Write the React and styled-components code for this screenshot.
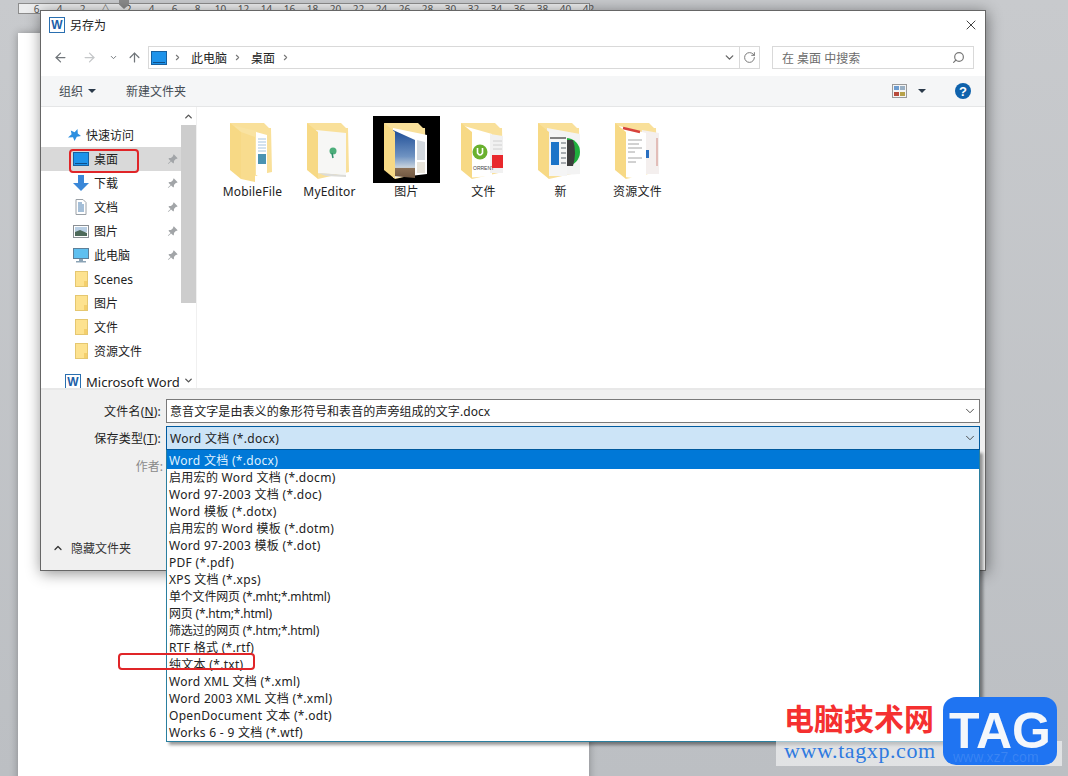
import React from "react";
import styled, { createGlobalStyle } from "styled-components";
import { ArrowLeft, ArrowRight, ArrowUp, ChevronDown, ChevronRight, ChevronUp, RotateCw, Search, X } from "lucide-react";
import { BsPinAngleFill } from "react-icons/bs";

const GlobalStyle = createGlobalStyle`
html, body {
    margin: 0;
    padding: 0;
    background: #c0c3c7;
}
* { box-sizing: border-box; }
`

const Workspace = styled.div`
position: relative;
width: 1068px;
height: 776px;
overflow: hidden;
padding: 3px 0 0 18px;
background: linear-gradient(180deg, #c8cacd 0%, #bcbfc3 100%);
font-family: "Noto Sans", "Noto Sans CJK SC", sans-serif;
font-size: 12px;
color: #222;
`

const Ruler = styled.div`
position: relative;
display: flex;
width: 572px;
height: 11px;
padding: 1px 0 0 6px;
background: #ecedee;
border: 1px solid #8c8c8c;
font-size: 10px;
line-height: 9px;
color: #555;
`

const RulerMark = styled.span`
flex: 0 0 23px;
text-align: center;
`

const IndentMarker = styled.span`
position: absolute;
left: 100px;
top: -4px;
width: 10px;
height: 9px;
background: #8a8a8a;
clip-path: polygon(0 0, 100% 0, 100% 50%, 50% 100%, 0 50%);
`

const Page = styled.div`
width: 571px;
height: 760px;
margin-top: 19px;
background: #fff;
box-shadow: 0 0 8px rgba(0,0,0,.3);
`

const Dialog = styled.div`
position: absolute;
left: 40px;
top: 10px;
width: 946px;
height: 561px;
display: flex;
flex-direction: column;
background: #fff;
border: 1px solid #666;
box-shadow: 1px 2px 14px rgba(0,0,0,.45);
`

const TitleBar = styled.div`
display: flex;
align-items: center;
flex: 0 0 34px;
padding: 0 6px 6px 8px;
gap: 5px;
`

const AppBadge = styled.span`
display: flex;
align-items: center;
justify-content: center;
flex: 0 0 16px;
height: 16px;
background: #fff;
border: 1px solid #2a6fb0;
color: #1c5fa8;
font-family: "Liberation Sans", sans-serif;
font-size: 12px;
font-weight: 700;
line-height: 1;
`

const CloseButton = styled.span`
display: flex;
margin-left: auto;
color: #111;
`

const NavBar = styled.div`
display: flex;
align-items: flex-start;
flex: 0 0 31px;
padding-top: 1px;
`

const NavCell = styled.span`
display: flex;
align-items: center;
justify-content: center;
flex: 0 0 ${props => props.$w}px;
height: 23px;
color: ${props => props.$muted ? '#c4c6c8' : '#70757a'};
`

const AddressBox = styled.div`
display: flex;
align-items: center;
width: 612px;
height: 23px;
margin-left: 6px;
padding-left: 2px;
gap: 6px;
border: 1px solid #d9d9d9;
`

const Crumb = styled.span`
color: #222;
`

const CrumbArrow = styled.span`
display: flex;
margin-right: 3px;
color: #777;
`

const AddressEnd = styled.span`
display: flex;
align-items: center;
margin-left: auto;
height: 100%;
`

const AddressDrop = styled.span`
display: flex;
padding-right: 3px;
color: #666;
`

const RefreshCell = styled.span`
display: flex;
align-items: center;
justify-content: center;
width: 20px;
height: 100%;
border-left: 1px solid #d9d9d9;
color: #777;
`

const SearchBox = styled.div`
display: flex;
align-items: center;
justify-content: space-between;
width: 202px;
height: 23px;
margin-left: 12px;
padding: 0 8px 0 9px;
border: 1px solid #d9d9d9;
color: #6d6d6d;
`

const FlippedIcon = styled.span`
display: flex;
transform: scaleX(-1);
color: #777;
`

const Toolbar = styled.div`
display: flex;
align-items: center;
flex: 0 0 31px;
padding: 0 14px 0 18px;
background: #f5f6f7;
border-bottom: 1px solid #e5e6e7;
color: #444b53;
`

const Caret = styled.span`
width: 0;
height: 0;
margin-left: ${props => props.$gap}px;
border-left: 4px solid transparent;
border-right: 4px solid transparent;
border-top: 4px solid #2b3a4a;
`

const ToolLink = styled.span`
margin-left: 30px;
`

const ViewIcon = styled.svg`
margin-left: auto;
`

const HelpBadge = styled.span`
display: flex;
align-items: center;
justify-content: center;
width: 16px;
height: 16px;
margin-left: 29px;
border-radius: 50%;
background: #0f62ac;
color: #fff;
font-family: "Liberation Sans", sans-serif;
font-size: 13px;
font-weight: 700;
`

const Body = styled.div`
display: flex;
flex: 0 0 281px;
overflow: hidden;
`

const Sidebar = styled.nav`
flex: 0 0 140px;
padding-top: 16px;
overflow: hidden;
font-size: 12px;
`

const NavRow = styled.div`
display: flex;
align-items: center;
height: 24px;
margin-top: ${props => props.$gapTop || 0}px;
padding-left: ${props => props.$indent}px;
padding-right: 3px;
gap: ${props => props.$gap}px;
background: ${props => props.$active ? '#d9d9d9' : 'transparent'};
white-space: nowrap;
`

const NavIcon = styled.span`
display: flex;
justify-content: center;
flex: 0 0 16px;
`

const PinMark = styled.span`
display: flex;
margin-left: auto;
color: #a2a5a8;
`

const WordLabel = styled.span`
font-size: 13px;
line-height: 10px;
`

const ScrollTrack = styled.div`
display: flex;
flex-direction: column;
flex: 0 0 16px;
border-right: 1px solid #f0f0f0;
`

const ScrollArrow = styled.span`
display: flex;
align-items: ${props => props.$end ? 'flex-end' : 'center'};
justify-content: center;
flex: 0 0 ${props => props.$h}px;
padding-bottom: ${props => props.$end ? 2 : 0}px;
color: #555;
`

const ScrollThumb = styled.span`
flex: 0 0 178px;
width: 15px;
background: #cdcdcd;
`

const FileArea = styled.div`
display: flex;
align-items: flex-start;
flex: 1;
padding: 9px 0 0 17px;
`

const FileItem = styled.div`
display: flex;
flex-direction: column;
align-items: center;
width: 77px;
`

const FileName = styled.span`
line-height: 17px;
letter-spacing: .2px;
`

const FormPanel = styled.div`
display: flex;
flex-direction: column;
flex: 1;
padding: 9px 5px 0 0;
background: #f0f0f0;
border-top: 2px solid #e8e8e8;
`

const FormRow = styled.div`
position: relative;
display: grid;
grid-template-columns: 120px 1fr;
align-items: center;
column-gap: 5px;
margin-bottom: 3px;
`

const FieldLabel = styled.label`
text-align: right;
letter-spacing: .2px;
color: #222;
`

const ComboBox = styled.div`
display: flex;
align-items: center;
justify-content: space-between;
height: 24px;
padding: 0 2px 0 3px;
background: ${props => props.$open ? '#cce4f7' : '#fff'};
border: 1px solid ${props => props.$open ? '#005a9e' : '#7a7a7a'};
letter-spacing: ${props => props.$open ? '.3px' : '.08px'};
white-space: nowrap;
`

const ComboArrow = styled.span`
display: flex;
color: #444;
`

const DropList = styled.ul`
position: absolute;
z-index: 3;
left: 125px;
right: 0;
top: 24px;
margin: 0;
padding: 0;
list-style: none;
background: #fff;
border: 1px solid #2a7f9f;
border-top: 0;
box-shadow: 3px 3px 3px rgba(0,0,0,.4);
`

const DropItem = styled.li`
height: 17px;
padding-left: 2px;
line-height: 17px;
white-space: nowrap;
letter-spacing: ${props => props.$tight ? '-.2px' : '.3px'};
background: ${props => props.$selected ? '#0078d7' : 'transparent'};
color: ${props => props.$selected ? '#dff1ff' : '#222'};
&:first-child { height: 19px; line-height: 21px; }
`

const AuthorRow = styled.div`
width: 122px;
margin-top: 4px;
text-align: right;
color: #8a8a8a;
`

const HideRow = styled.div`
display: flex;
align-items: center;
margin-top: auto;
padding: 0 0 13px 11px;
gap: 7px;
color: #333;
`

const Annotation = styled.span`
position: absolute;
z-index: 4;
left: ${props => props.$x}px;
top: ${props => props.$y}px;
width: ${props => props.$w}px;
height: ${props => props.$h}px;
border: 2.5px solid #e02528;
border-radius: 4px;
`

const Watermark = styled.div`
position: absolute;
z-index: 5;
left: 776px;
top: 697px;
display: flex;
width: 286px;
height: 69px;
padding-left: 8px;
background: linear-gradient(transparent 44px, rgba(255,255,255,.55) 44px);
`

const SiteBlock = styled.div`
display: flex;
flex-direction: column;
flex: 0 0 159px;
`

const SiteName = styled.span`
font-family: "Noto Sans CJK SC", sans-serif;
font-size: 30px;
font-weight: 700;
line-height: 40px;
color: #f53030;
white-space: nowrap;
`

const SiteUrl = styled.span`
margin-top: 1px;
font-family: "Liberation Serif", serif;
font-size: 22px;
line-height: 26px;
color: #2f7ae0;
letter-spacing: .6px;
white-space: nowrap;
`

const TagLogo = styled.span`
position: relative;
display: flex;
align-items: center;
justify-content: center;
width: 114px;
height: 68px;
border-radius: 13px;
background: #1f74f2;
color: #f4f7fb;
font-family: "Liberation Sans", sans-serif;
font-size: 50px;
font-weight: 700;
line-height: 1;
`

const TagShadowText = styled.span`
position: absolute;
left: 10px;
bottom: 1px;
font-size: 14px;
font-weight: 400;
color: rgba(255,255,255,.13);
`

const DesktopIcon = () => (
    <svg width="16" height="14" viewBox="0 0 16 14">
        <rect x=".5" y=".5" width="15" height="13" fill="#1e93ea" stroke="#17609f" />
        <rect x="2" y="11" width="12" height="1" fill="#0d4f8a" />
    </svg>
)

const StarIcon = () => (
    <svg width="13" height="13" viewBox="0 0 13 13">
        <path d="M9.5 0 9.8 4.6 13 7 8.8 7.8 6.5 12 5 8.2 0 8.5 3.6 5.2 2.8 1.6 6.6 3.2Z" fill="#2c8fe0" />
    </svg>
)

const DownloadIcon = () => (
    <svg width="16" height="16" viewBox="0 0 16 16">
        <path d="M5 0H11V8H16L8 16 0 8H5Z" fill="#3a87d8" />
    </svg>
)

const DocIcon = () => (
    <svg width="16" height="16" viewBox="0 0 16 16">
        <path d="M3 .5H10L13 3.5V15.500H3Z" fill="#fff" stroke="#9aa0a6" />
        <path d="M5 4H9M5 6H11M5 8H11M5 10H11M5 12H11" stroke="#4a7fb0" />
    </svg>
)

const PictureIcon = () => (
    <svg width="16" height="13" viewBox="0 0 16 13">
        <rect x=".5" y=".5" width="15" height="12" fill="#fff" stroke="#8a8f94" />
        <rect x="2" y="2" width="12" height="5" fill="#b9cfe4" />
        <path d="M2 7 7 5 14 8V11H2Z" fill="#4d6a5a" />
    </svg>
)

const ComputerIcon = () => (
    <svg width="16" height="15" viewBox="0 0 16 15">
        <rect x=".5" y=".5" width="15" height="10" fill="#5fc0f0" stroke="#5e7f98" />
        <rect x="6" y="11" width="4" height="2" fill="#8ba3b5" />
        <rect x="3" y="13" width="10" height="1.500" fill="#8ba3b5" />
    </svg>
)

const SmallFolder = () => (
    <svg width="13" height="16" viewBox="0 0 13 16">
        <rect x=".5" y=".5" width="12" height="15" fill="#fde28f" stroke="#e5c770" />
        <rect x="9" y="10" width="3" height="5" fill="#f4cf6c" />
    </svg>
)

const FolderThumb = ({ dark, children }) => (
    <svg width="67" height="67" viewBox="0 0 67 67">
        {dark && <rect width="67" height="67" fill="#000" />}
        <path d="M11 7H45L50 12H52L53 56 22 63Z" fill="#f9e09a" />
        {children}
        <path d="M11 7 22 16V63L11 54Z" fill="#f7d985" />
    </svg>
)

const MobileThumb = () => (
    <FolderThumb>
        <path d="M16 10 38 15V60L16 54Z" fill="#f9e3a2" />
        <path d="M37 16 48 19V59L37 59Z" fill="#fff" />
        <path d="M39 23H47M39 26H47M39 29H47M39 32H47M39 35H47" stroke="#a6c4de" />
        <rect x="39" y="38" width="8" height="10" fill="#4a93b2" />
        <path d="M22 16 36 21V66L22 63Z" fill="#f8dc8e" />
    </FolderThumb>
)

const EditorThumb = () => (
    <FolderThumb>
        <path d="M20 14 50 17V59L20 57Z" fill="#f7f7f5" />
        <path d="M22 57 50 59V61L30 60Z" fill="#dcdcd8" />
        <circle cx="37" cy="35" r="3.500" fill="#4cae7a" />
        <path d="M36 37 37 42" stroke="#2f8f6b" strokeWidth="1.500" />
    </FolderThumb>
)

const PicturesThumb = () => (
    <FolderThumb dark>
        <defs>
            <linearGradient id="skyFill" x1="0" y1="0" x2="0" y2="1">
                <stop offset="0" stopColor="#1d4c96" />
                <stop offset=".55" stopColor="#6f93c2" />
                <stop offset=".78" stopColor="#c9d3dd" />
                <stop offset=".8" stopColor="#8a6f55" />
                <stop offset="1" stopColor="#6e5640" />
            </linearGradient>
        </defs>
        <path d="M20 12 54 19V58L20 62Z" fill="#fff" />
        <path d="M20 14 42 24V62L20 60Z" fill="url(#skyFill)" />
        <path d="M44 24 52 26V44H44Z" fill="#d3d9df" />
        <path d="M44 46H52V57H44Z" fill="#e8e4da" />
    </FolderThumb>
)

const TorrentThumb = () => (
    <FolderThumb>
        <path d="M14 10 42 18V60L14 62Z" fill="#fff" />
        <path d="M40 18 53 20V57H40Z" fill="#f1f1f1" />
        <circle cx="30" cy="36" r="7.500" fill="#6ab12f" />
        <path d="M27.500 32V37Q30 41 32.500 37V32" stroke="#fff" strokeWidth="1.600" fill="none" />
        <text x="23" y="54" fontSize="5" fontFamily="Liberation Sans, sans-serif" fill="#444">ORRENT</text>
        <rect x="42" y="39" width="11" height="13" fill="#e8282c" />
        <path d="M43 25H52M43 29H52M43 33H52" stroke="#d0d0d0" />
    </FolderThumb>
)

const NewThumb = () => (
    <FolderThumb>
        <path d="M20 12 53 18V58L20 60Z" fill="#f3f3f3" />
        <circle cx="39" cy="36" r="14" fill="#1fae3c" />
        <path d="M37 24H46Q50 36 46 50H37Z" fill="#3c3c3c" />
        <path d="M20 16 40 21V60L20 60Z" fill="#f5f5f5" />
        <rect x="24" y="26" width="8" height="23" fill="#1c74c8" />
        <path d="M34 27H39M34 32H39M34 37H39M34 42H39M34 47H39" stroke="#a8acb0" strokeWidth="2" />
        <path d="M23 22H39" stroke="#5a5a5a" strokeWidth="1.500" />
    </FolderThumb>
)

const ResourceThumb = () => (
    <FolderThumb>
        <path d="M38 14 55 17V58H38Z" fill="#f4efee" />
        <path d="M15 10 42 17V64L15 60Z" fill="#fff" />
        <path d="M19 12 36 16" stroke="#d7423c" strokeWidth="2.500" />
        <path d="M24 24H38M24 28H35M24 32H38M24 36H31M24 42H38M24 46H32" stroke="#a4a4a4" />
        <rect x="42" y="34" width="3" height="8" fill="#2a6fc0" />
        <path d="M53 22V50" stroke="#e2bdb8" strokeWidth="2" />
    </FolderThumb>
)

const RULER_MARKS = ['6', '4', '2', '△', '2', '4', '6', '8', '10', '12', '14', '16', '18', '20', '22', '24', '26', '28', '30', '32', '34', '36', '38', '40', '42']

const QUICK_LINKS = [
    { name: '桌面', icon: <DesktopIcon />, pinned: true, active: true },
    { name: '下载', icon: <DownloadIcon />, pinned: true },
    { name: '文档', icon: <DocIcon />, pinned: true },
    { name: '图片', icon: <PictureIcon />, pinned: true },
    { name: '此电脑', icon: <ComputerIcon />, pinned: true },
    { name: 'Scenes', icon: <SmallFolder /> },
    { name: '图片', icon: <SmallFolder /> },
    { name: '文件', icon: <SmallFolder /> },
    { name: '资源文件', icon: <SmallFolder /> },
]

const FILES = [
    { name: 'MobileFile', thumb: <MobileThumb /> },
    { name: 'MyEditor', thumb: <EditorThumb /> },
    { name: '图片', thumb: <PicturesThumb /> },
    { name: '文件', thumb: <TorrentThumb /> },
    { name: '新', thumb: <NewThumb /> },
    { name: '资源文件', thumb: <ResourceThumb /> },
]

const SAVE_TYPES = [
    'Word 文档 (*.docx)',
    '启用宏的 Word 文档 (*.docm)',
    'Word 97-2003 文档 (*.doc)',
    'Word 模板 (*.dotx)',
    '启用宏的 Word 模板 (*.dotm)',
    'Word 97-2003 模板 (*.dot)',
    'PDF (*.pdf)',
    'XPS 文档 (*.xps)',
    '单个文件网页 (*.mht;*.mhtml)',
    '网页 (*.htm;*.html)',
    '筛选过的网页 (*.htm;*.html)',
    'RTF 格式 (*.rtf)',
    '纯文本 (*.txt)',
    'Word XML 文档 (*.xml)',
    'Word 2003 XML 文档 (*.xml)',
    'OpenDocument 文本 (*.odt)',
    'Works 6 - 9 文档 (*.wtf)',
]

const App = () => {
    return (
        <Workspace>
            <GlobalStyle />
            <Ruler>
                <IndentMarker />
                {RULER_MARKS.map((mark, i) => <RulerMark key={i}>{mark}</RulerMark>)}
            </Ruler>
            <Page />

            <Dialog>
                <TitleBar>
                    <AppBadge>W</AppBadge>
                    <span>另存为</span>
                    <CloseButton><X size={16} strokeWidth={1.2} /></CloseButton>
                </TitleBar>

                <NavBar>
                    <NavCell $w={38}><ArrowLeft size={15} strokeWidth={2} /></NavCell>
                    <NavCell $w={20} $muted><ArrowRight size={15} strokeWidth={2} /></NavCell>
                    <NavCell $w={28}><ChevronDown size={9} strokeWidth={2.5} /></NavCell>
                    <NavCell $w={14}><ArrowUp size={15} strokeWidth={2} /></NavCell>
                    <AddressBox>
                        <DesktopIcon />
                        <CrumbArrow><ChevronRight size={9} strokeWidth={3} /></CrumbArrow>
                        <Crumb>此电脑</Crumb>
                        <CrumbArrow><ChevronRight size={9} strokeWidth={3} /></CrumbArrow>
                        <Crumb>桌面</Crumb>
                        <CrumbArrow><ChevronRight size={9} strokeWidth={3} /></CrumbArrow>
                        <AddressEnd>
                            <AddressDrop><ChevronDown size={13} strokeWidth={2.5} /></AddressDrop>
                            <RefreshCell><RotateCw size={13} strokeWidth={1.8} /></RefreshCell>
                        </AddressEnd>
                    </AddressBox>
                    <SearchBox>
                        <span>在 桌面 中搜索</span>
                        <FlippedIcon><Search size={13} strokeWidth={2.2} /></FlippedIcon>
                    </SearchBox>
                </NavBar>

                <Toolbar>
                    <span>组织</span>
                    <Caret $gap={5} />
                    <ToolLink>新建文件夹</ToolLink>
                    <ViewIcon width="15" height="14" viewBox="0 0 15 14">
                        <rect x=".5" y=".5" width="14" height="13" fill="#f5f5f5" stroke="#9a9a9a" />
                        <rect x="2" y="2" width="5" height="4" fill="#6d9ccf" />
                        <rect x="8" y="2" width="5" height="4" fill="#9ab0c4" />
                        <rect x="2" y="8" width="5" height="4" fill="#b84a3a" />
                        <rect x="8" y="8" width="5" height="4" fill="#b8a24a" />
                    </ViewIcon>
                    <Caret $gap={11} />
                    <HelpBadge>?</HelpBadge>
                </Toolbar>

                <Body>
                    <Sidebar>
                        <NavRow $indent={27} $gap={5}>
                            <StarIcon />
                            <span>快速访问</span>
                        </NavRow>
                        {QUICK_LINKS.map(link => (
                            <NavRow key={link.name + link.pinned} $indent={32} $gap={5} $active={link.active}>
                                <NavIcon>{link.icon}</NavIcon>
                                <span>{link.name}</span>
                                {link.pinned && <PinMark><BsPinAngleFill size={11} /></PinMark>}
                            </NavRow>
                        ))}
                        <NavRow $indent={24} $gap={5} $gapTop={7}>
                            <AppBadge>W</AppBadge>
                            <WordLabel>Microsoft Word</WordLabel>
                        </NavRow>
                    </Sidebar>
                    <ScrollTrack>
                        <ScrollArrow $h={18}><ChevronUp size={11} strokeWidth={3} /></ScrollArrow>
                        <ScrollThumb />
                        <ScrollArrow $h={85} $end><ChevronDown size={11} strokeWidth={3} /></ScrollArrow>
                    </ScrollTrack>
                    <FileArea>
                        {FILES.map(file => (
                            <FileItem key={file.name}>
                                {file.thumb}
                                <FileName>{file.name}</FileName>
                            </FileItem>
                        ))}
                    </FileArea>
                </Body>

                <FormPanel>
                    <FormRow>
                        <FieldLabel>文件名(<u>N</u>):</FieldLabel>
                        <ComboBox>
                            <span>意音文字是由表义的象形符号和表音的声旁组成的文字.docx</span>
                            <ComboArrow><ChevronDown size={14} strokeWidth={1.6} /></ComboArrow>
                        </ComboBox>
                    </FormRow>
                    <FormRow>
                        <FieldLabel>保存类型(<u>T</u>):</FieldLabel>
                        <ComboBox $open>
                            <span>Word 文档 (*.docx)</span>
                            <ComboArrow><ChevronDown size={14} strokeWidth={1.6} /></ComboArrow>
                        </ComboBox>
                        <DropList>
                            {SAVE_TYPES.map((type, i) => (
                                <DropItem key={type} $selected={i === 0} $tight={type.includes('网页')}>{type}</DropItem>
                            ))}
                        </DropList>
                    </FormRow>
                    <AuthorRow>作者:</AuthorRow>
                    <HideRow>
                        <ChevronUp size={12} strokeWidth={2.5} />
                        <span>隐藏文件夹</span>
                    </HideRow>
                </FormPanel>
            </Dialog>

            <Annotation $x={69} $y={149} $w={70} $h={24} />
            <Annotation $x={118} $y={653} $w={137} $h={17} />

            <Watermark>
                <SiteBlock>
                    <SiteName>电脑技术网</SiteName>
                    <SiteUrl>www.tagxp.com</SiteUrl>
                </SiteBlock>
                <TagLogo>
                    TAG
                    <TagShadowText>www.xz7.com</TagShadowText>
                </TagLogo>
            </Watermark>
        </Workspace>
    )
}

export default App
